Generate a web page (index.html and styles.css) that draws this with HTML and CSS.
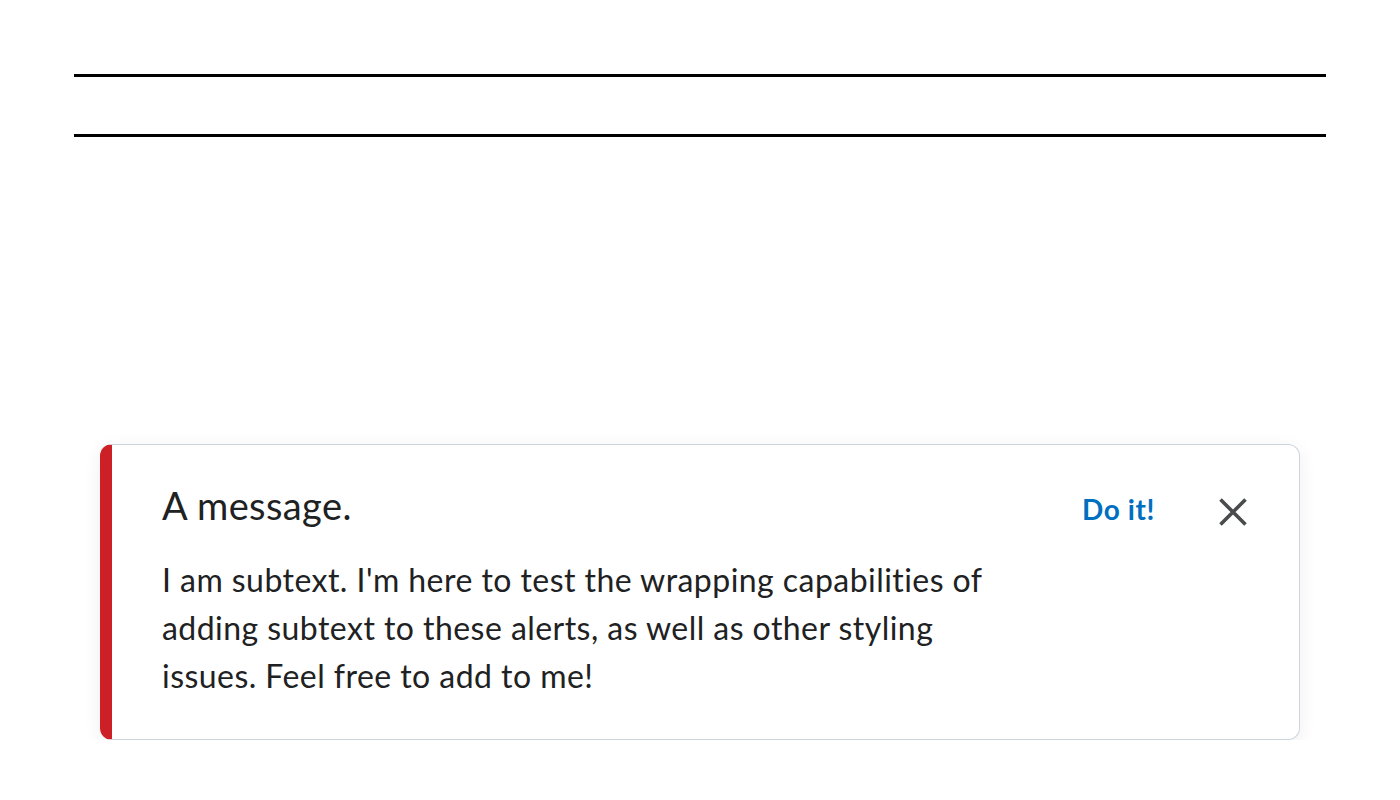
FILE: index.html
```html
<!DOCTYPE html>
<html>
<head>
<meta charset="utf-8">
<link rel="stylesheet" href="styles.css">
</head>
<body>
<div class="page">
  <div class="band"></div>
  <div class="spacer"></div>
  <div class="alert">
    <div class="alert-content">
      <div class="alert-title">A message.</div>
      <div class="alert-subtext">I am subtext. I'm here to test the wrapping capabilities of adding subtext to these alerts, as well as other styling issues. Feel free to add to me!</div>
    </div>
    <button class="alert-action">Do it!</button>
    <button class="alert-close" aria-label="Close">
      <svg width="30" height="30" viewBox="0 0 30 30"><path d="M2.5 2.5 L27.5 27.5 M27.5 2.5 L2.5 27.5" stroke="#494c4e" stroke-width="3.6" stroke-linecap="butt" fill="none"/></svg>
    </button>
  </div>
</div>
</body>
</html>
```
FILE: styles.css
```css
html, body {
  margin: 0;
  padding: 0;
  background: #ffffff;
}
.page {
  padding: 74px 74px 0 74px;
  font-family: Lato, "Noto Sans", sans-serif;
}
.band {
  height: 57px;
  border-top: 3px solid #000;
  border-bottom: 3px solid #000;
}
.spacer {
  height: 307px;
}
.alert {
  margin: 0 26px 0 26px;
  display: flex;
  align-items: flex-start;
  background: #fff;
  border: 1px solid #cdd5dc;
  border-left: 12px solid #cd2026;
  border-radius: 12px;
  box-shadow: 0 4px 18px rgba(0, 0, 0, 0.07);
  padding: 32px 51px 39px 50px;
}
.alert-content {
  flex: 1 1 auto;
  max-width: 840px;
  color: #202122;
}
.alert-title {
  font-size: 38px;
  letter-spacing: 0.4px;
  line-height: 56px;
  color: #202122;
}
.alert-subtext {
  margin-top: 23px;
  font-size: 32px;
  letter-spacing: 0.45px;
  line-height: 48px;
  color: #202122;
}
.alert-action {
  margin-left: auto;
  margin-top: 8px;
  background: none;
  border: none;
  padding: 0;
  font-family: Lato, sans-serif;
  font-weight: 700;
  font-size: 28px;
  line-height: 48px;
  letter-spacing: 0.6px;
  color: #006fbf;
  cursor: pointer;
}
.alert-close {
  margin-left: 63px;
  margin-top: 20px;
  background: none;
  border: none;
  padding: 0;
  width: 30px;
  height: 30px;
  display: flex;
  align-items: center;
  justify-content: center;
}
```
